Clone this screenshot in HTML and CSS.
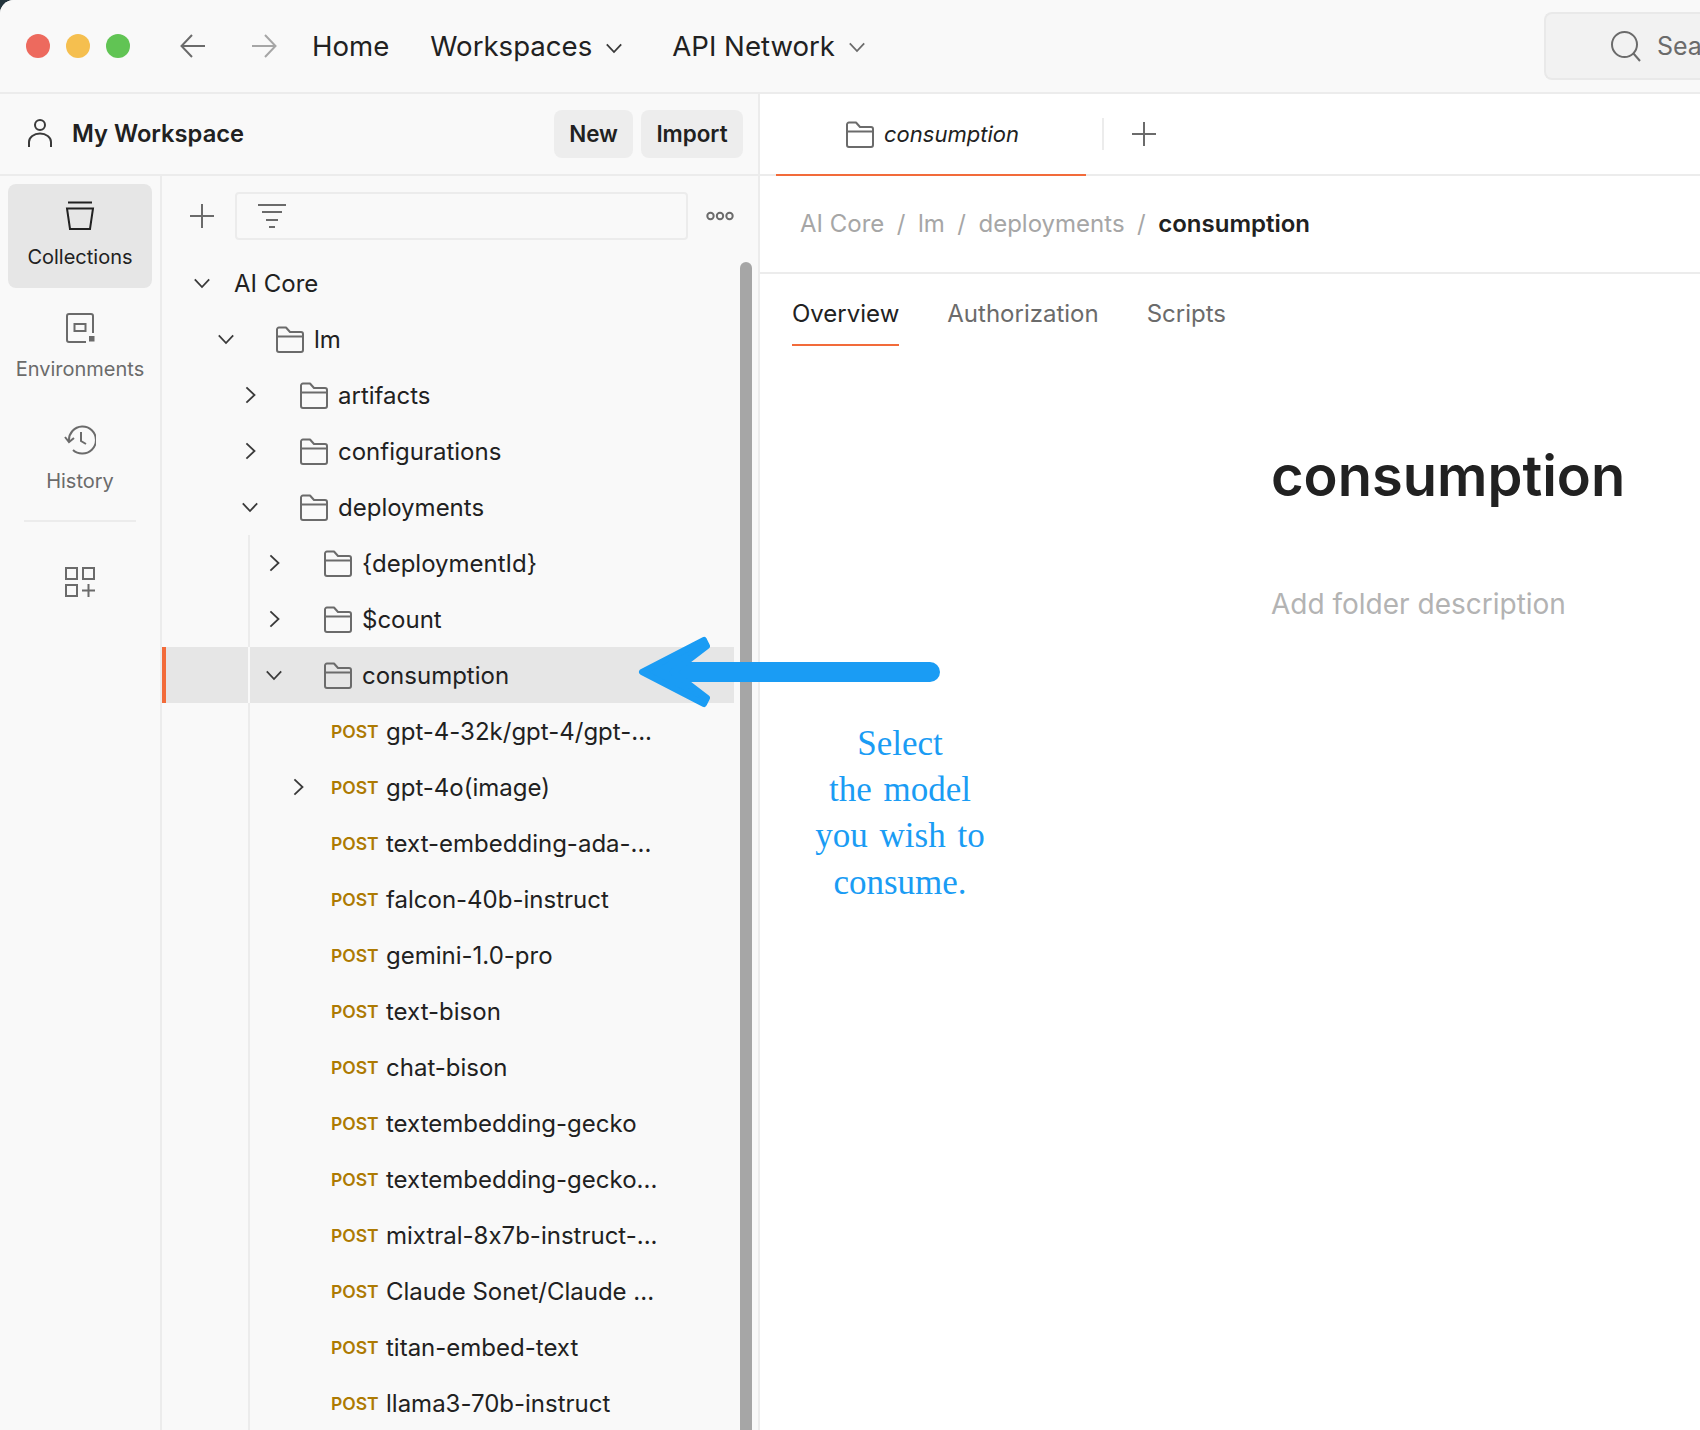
FILE: index.html
```html
<!DOCTYPE html>
<html lang="en">
<head>
    <meta charset="UTF-8">
    <title>Postman - consumption</title>
    <link rel="stylesheet" href="styles.css">
</head>
<body>
    <svg class="defs" width="0" height="0">
        <symbol id="folder" viewBox="0 0 28 28" fill="none" stroke="currentColor" stroke-width="2" stroke-linejoin="round">
            <path d="M1 4.500a2 2 0 0 1 2-2h7l4 4.500h11a2 2 0 0 1 2 2V25a2 2 0 0 1-2 2H3a2 2 0 0 1-2-2z"/>
            <path d="M1 11.500h26"/>
        </symbol>
        <symbol id="chev-down" viewBox="0 0 20 20" fill="none" stroke="currentColor" stroke-width="2">
            <path d="M2 6l8 8.500L18 6"/>
        </symbol>
        <symbol id="chev-right" viewBox="0 0 20 20" fill="none" stroke="currentColor" stroke-width="2">
            <path d="M6 1.500L15 10l-9 8.500"/>
        </symbol>
        <symbol id="plus" viewBox="0 0 26 26" fill="none" stroke="currentColor" stroke-width="2">
            <path d="M13 1v24M1 13h24"/>
        </symbol>
    </svg>

    <div class="app">
        <header class="topbar">
            <div class="lights">
                <span class="light red"></span>
                <span class="light yellow"></span>
                <span class="light green"></span>
            </div>
            <svg class="nav-arrow back" width="26" height="24" viewBox="0 0 26 24" fill="none" stroke="currentColor" stroke-width="2"><path d="M25 12H2M12 1L1.500 12 12 23"/></svg>
            <svg class="nav-arrow forward" width="26" height="24" viewBox="0 0 26 24" fill="none" stroke="currentColor" stroke-width="2"><path d="M1 12h23M14 1l10.500 11L14 23"/></svg>
            <a class="nav-link home">Home</a>
            <a class="nav-link workspaces">Workspaces <svg width="18" height="18"><use href="#chev-down"/></svg></a>
            <a class="nav-link api">API Network <svg class="light-chev" width="18" height="18"><use href="#chev-down"/></svg></a>
            <div class="search">
                <svg width="32" height="32" viewBox="0 0 32 32" fill="none" stroke="currentColor" stroke-width="2"><circle cx="14.500" cy="14.500" r="12.500"/><path d="M23.500 23.500L30 31"/></svg>
                <span>Search Postman</span>
            </div>
        </header>

        <div class="workarea">
            <aside class="sidebar">
                <div class="ws-head">
                    <svg width="24" height="28" viewBox="0 0 24 28" fill="none" stroke="#3a3a3a" stroke-width="2"><circle cx="12" cy="6" r="5"/><path d="M1 28v-5a11 8.500 0 0 1 22 0v5"/></svg>
                    <span class="ws-name">My Workspace</span>
                    <button class="ws-btn new">New</button>
                    <button class="ws-btn">Import</button>
                </div>
                <div class="side-body">
                    <nav class="rail">
                        <a class="rail-item active">
                            <svg width="30" height="30" viewBox="0 0 30 30" fill="none" stroke="currentColor" stroke-width="2"><path d="M3 1.500h24M2 7.500h26l-3 20.500H5z"/></svg>
                            <span>Collections</span>
                        </a>
                        <a class="rail-item">
                            <svg width="30" height="30" viewBox="0 0 30 30" fill="none" stroke="currentColor" stroke-width="2"><path d="M28 20V3a2 2 0 0 0-2-2H4a2 2 0 0 0-2 2v24a2 2 0 0 0 2 2h17"/><rect x="9.500" y="11" width="11" height="7"/><rect x="24" y="23" width="5.500" height="5.500" fill="currentColor" stroke="none"/></svg>
                            <span>Environments</span>
                        </a>
                        <a class="rail-item">
                            <svg width="32" height="30" viewBox="0 0 32 30" fill="none" stroke="currentColor" stroke-width="2"><path d="M5 16A13.500 13.500 0 1 1 18 28.500a13.500 13.500 0 0 1-9-3.500"/><path d="M1 12l4 5 5-4M17 7v9l5 3"/></svg>
                            <span>History</span>
                        </a>
                        <div class="rail-line"></div>
                        <svg class="rail-apps" width="30" height="30" viewBox="0 0 30 30" fill="none" stroke="currentColor" stroke-width="2"><rect x="1" y="1" width="11" height="11"/><rect x="18" y="1" width="11" height="11"/><rect x="1" y="18" width="11" height="11"/><path d="M23.500 17v13M17 23.500h13"/></svg>
                    </nav>
                    <section class="panel">
                        <div class="panel-tools">
                            <svg class="tool-plus" width="26" height="26"><use href="#plus"/></svg>
                            <div class="filter">
                                <svg width="28" height="24" viewBox="0 0 28 24" fill="none" stroke="currentColor" stroke-width="2"><path d="M0 1h28M4 8h20M8 16h12M11 23h6"/></svg>
                            </div>
                            <svg class="tool-more" width="28" height="12" viewBox="0 0 28 12" fill="none" stroke="currentColor" stroke-width="2"><circle cx="4.500" cy="6" r="3.200"/><circle cx="14" cy="6" r="3.200"/><circle cx="23.500" cy="6" r="3.200"/></svg>
                        </div>
                        <div class="tree">
                            <div class="row lvl0"><svg class="chev" width="18" height="18"><use href="#chev-down"/></svg><span class="name">AI Core</span></div>
                            <div class="row lvl1"><svg class="chev" width="18" height="18"><use href="#chev-down"/></svg><svg class="fold" width="28" height="28"><use href="#folder"/></svg><span class="name">lm</span></div>
                            <div class="row lvl2"><svg class="chev" width="18" height="18"><use href="#chev-right"/></svg><svg class="fold" width="28" height="28"><use href="#folder"/></svg><span class="name">artifacts</span></div>
                            <div class="row lvl2"><svg class="chev" width="18" height="18"><use href="#chev-right"/></svg><svg class="fold" width="28" height="28"><use href="#folder"/></svg><span class="name">configurations</span></div>
                            <div class="row lvl2"><svg class="chev" width="18" height="18"><use href="#chev-down"/></svg><svg class="fold" width="28" height="28"><use href="#folder"/></svg><span class="name">deployments</span></div>
                            <div class="row lvl3 guide"><svg class="chev" width="18" height="18"><use href="#chev-right"/></svg><svg class="fold" width="28" height="28"><use href="#folder"/></svg><span class="name">{deploymentId}</span></div>
                            <div class="row lvl3 guide"><svg class="chev" width="18" height="18"><use href="#chev-right"/></svg><svg class="fold" width="28" height="28"><use href="#folder"/></svg><span class="name">$count</span></div>
                            <div class="row lvl3 guide selected"><svg class="chev" width="18" height="18"><use href="#chev-down"/></svg><svg class="fold" width="28" height="28"><use href="#folder"/></svg><span class="name">consumption</span></div>
                            <div class="row req guide"><span class="post">POST</span><span class="name">gpt-4-32k/gpt-4/gpt-...</span></div>
                            <div class="row req guide has-chev"><svg class="chev" width="18" height="18"><use href="#chev-right"/></svg><span class="post">POST</span><span class="name">gpt-4o(image)</span></div>
                            <div class="row req guide"><span class="post">POST</span><span class="name">text-embedding-ada-...</span></div>
                            <div class="row req guide"><span class="post">POST</span><span class="name">falcon-40b-instruct</span></div>
                            <div class="row req guide"><span class="post">POST</span><span class="name">gemini-1.0-pro</span></div>
                            <div class="row req guide"><span class="post">POST</span><span class="name">text-bison</span></div>
                            <div class="row req guide"><span class="post">POST</span><span class="name">chat-bison</span></div>
                            <div class="row req guide"><span class="post">POST</span><span class="name">textembedding-gecko</span></div>
                            <div class="row req guide"><span class="post">POST</span><span class="name">textembedding-gecko...</span></div>
                            <div class="row req guide"><span class="post">POST</span><span class="name">mixtral-8x7b-instruct-...</span></div>
                            <div class="row req guide"><span class="post">POST</span><span class="name">Claude Sonet/Claude ...</span></div>
                            <div class="row req guide"><span class="post">POST</span><span class="name">titan-embed-text</span></div>
                            <div class="row req guide"><span class="post">POST</span><span class="name">llama3-70b-instruct</span></div>
                        </div>
                        <div class="scrollbar"></div>
                    </section>
                </div>
            </aside>

            <main class="main">
                <div class="tabbar">
                    <div class="tab">
                        <svg width="30" height="28"><use href="#folder"/></svg>
                        <span>consumption</span>
                    </div>
                    <div class="tab-sep"></div>
                    <svg class="tab-plus" width="26" height="26"><use href="#plus"/></svg>
                </div>
                <div class="crumbs">
                    <span>AI Core</span><i>/</i><span>lm</span><i>/</i><span>deployments</span><i>/</i><b>consumption</b>
                </div>
                <div class="subtabs">
                    <a class="subtab active">Overview</a>
                    <a class="subtab">Authorization</a>
                    <a class="subtab">Scripts</a>
                </div>
                <div class="overview">
                    <h1>consumption</h1>
                    <p>Add folder description</p>
                </div>
            </main>
        </div>

        <!-- annotation drawn on top of the screenshot -->
        <svg class="callout-arrow" width="320" height="80" viewBox="0 0 320 80">
            <path class="arrow-shaft" d="M30 36H295"/>
            <path class="arrow-head" d="M7 36L69 4L72 10L38 36L72 62L69 68z"/>
        </svg>
        <div class="callout-text">Select<br>the model<br>you wish to<br>consume.</div>
    </div>
</body>
</html>
```

FILE: styles.css
```css
* {
    box-sizing: border-box;
}

html, body {
    margin: 0;
    height: 100%;
    overflow: hidden;
}

body {
    background: #23343c;
    font-family: 'Inter', 'Noto Sans', sans-serif;
    font-feature-settings: "calt" 0;
    color: #212121;
}

.defs {
    position: absolute;
}

.app {
    position: relative;
    height: 1430px;
    width: 1700px;
    background: #fff;
    border-top-left-radius: 14px;
    overflow: hidden;
    display: flex;
    flex-direction: column;
}

/* top bar */
.topbar {
    flex: none;
    height: 94px;
    background: #f9f9f9;
    border-bottom: 2px solid #ececec;
    display: flex;
    align-items: center;
}

.lights {
    display: flex;
    gap: 16px;
    margin-left: 26px;
}

.light {
    width: 24px;
    height: 24px;
    border-radius: 50%;
}

.light.red { background: #ed6a5e; }
.light.yellow { background: #f5bf4f; }
.light.green { background: #61c454; }

.nav-arrow.back {
    margin-left: 50px;
    color: #6b6b6b;
}

.nav-arrow.forward {
    margin-left: 45px;
    color: #a6a6a6;
}

.nav-link {
    font-size: 27.600px;
    color: #212121;
    white-space: nowrap;
    display: flex;
    align-items: center;
    gap: 13px;
}

.nav-link svg {
    color: #3a3a3a;
    margin-top: 3px;
}

.nav-link svg.light-chev {
    color: #6b6b6b;
    margin-top: 1px;
}

.nav-link.home { margin-left: 35px; }
.nav-link.workspaces { margin-left: 41px; }
.nav-link.api { margin-left: 49px; }

.search {
    margin-left: auto;
    width: 156px;
    flex: none;
    height: 68px;
    background: #f2f2f2;
    border: 2px solid #e9e9e9;
    border-right: 0;
    border-radius: 8px 0 0 8px;
    display: flex;
    align-items: center;
    padding-left: 64px;
    gap: 15px;
    color: #6b6b6b;
    font-size: 25px;
    white-space: nowrap;
    overflow: hidden;
}

.search svg {
    flex: none;
}

/* workspace area */
.workarea {
    flex: 1;
    display: flex;
    min-height: 0;
}

.sidebar {
    flex: none;
    width: 760px;
    background: #f9f9f9;
    border-right: 2px solid #ececec;
    display: flex;
    flex-direction: column;
}

.ws-head {
    flex: none;
    height: 82px;
    border-bottom: 2px solid #ececec;
    display: flex;
    align-items: center;
    padding: 0 15px 2px 28px;
}

.ws-name {
    font-size: 23.700px;
    font-weight: 600;
    margin-left: 20px;
    margin-right: auto;
}

.ws-btn {
    height: 48px;
    width: 102px;
    border: none;
    border-radius: 8px;
    background: #ededed;
    color: #212121;
    font-family: inherit;
    font-feature-settings: inherit;
    font-size: 22.400px;
    font-weight: 600;
    margin-top: 1px;
}

.ws-btn.new {
    width: 79px;
    margin-right: 8px;
}

.side-body {
    flex: 1;
    display: flex;
    min-height: 0;
}

/* icon rail */
.rail {
    flex: none;
    width: 162px;
    border-right: 2px solid #ececec;
    padding: 8px 8px 0;
    display: flex;
    flex-direction: column;
    align-items: center;
}

.rail-item {
    width: 144px;
    height: 104px;
    margin-bottom: 8px;
    border-radius: 8px;
    display: flex;
    flex-direction: column;
    align-items: center;
    padding-top: 17px;
    gap: 14px;
    color: #6b6b6b;
    font-size: 20px;
}

.rail-item svg {
    flex: none;
}

.rail-item.active {
    background: #e6e6e6;
    color: #212121;
}

.rail-line {
    width: 112px;
    height: 2px;
    background: #ececec;
}

.rail-apps {
    margin-top: 45px;
    color: #6b6b6b;
}

/* collections panel */
.panel {
    flex: 1;
    position: relative;
    min-width: 0;
    overflow: hidden;
}

.panel-tools {
    height: 79px;
    display: flex;
    align-items: center;
    color: #6b6b6b;
}

.tool-plus {
    margin-left: 27px;
}

.filter {
    margin-left: 20px;
    width: 453px;
    height: 48px;
    border: 2px solid #ececec;
    border-radius: 4px;
    display: flex;
    align-items: center;
    padding-left: 21px;
}

.tool-more {
    margin-left: 18px;
}

.row {
    position: relative;
    height: 56px;
    width: 572px;
    display: flex;
    align-items: center;
    font-size: 24px;
    white-space: nowrap;
}

.lvl0 { padding-left: 31px; }
.lvl1 { padding-left: 55px; }
.lvl2 { padding-left: 79px; }
.lvl3 { padding-left: 103px; }

.chev {
    flex: none;
    color: #3a3a3a;
}

.fold {
    flex: none;
    margin-left: 41px;
    margin-right: 10px;
    color: #6b6b6b;
}

.lvl0 .name {
    margin-left: 23px;
}

.req {
    padding-left: 169px;
}

.req.has-chev {
    padding-left: 127px;
}

.req.has-chev .post {
    margin-left: 24px;
}

.post {
    width: 55px;
    flex: none;
    font-size: 17.500px;
    font-weight: 600;
    color: #ad7a03;
}

.guide::before {
    content: "";
    position: absolute;
    left: 86px;
    top: 0;
    bottom: 0;
    width: 2px;
    background: #ececec;
}

.selected {
    background: #e6e6e6;
    border-left: 4px solid #f26b3a;
    padding-left: 99px;
}

.selected::before {
    left: 82px;
    background: #f9f9f9;
}

.scrollbar {
    position: absolute;
    left: 578px;
    top: 86px;
    bottom: -10px;
    width: 12px;
    border-radius: 6px 6px 0 0;
    background: #a6a6a6;
}

/* right side */
.main {
    flex: 1;
    min-width: 0;
    background: #fff;
}

.tabbar {
    height: 82px;
    border-bottom: 2px solid #ececec;
    display: flex;
    align-items: center;
    padding-left: 16px;
}

.tab {
    width: 310px;
    height: 82px;
    align-self: flex-start;
    border-bottom: 2px solid #f26b3a;
    display: flex;
    align-items: center;
    gap: 9px;
    padding-left: 69px;
    color: #6b6b6b;
}

.tab span {
    font-size: 22px;
    font-style: italic;
    color: #212121;
}

.tab-sep {
    width: 2px;
    height: 32px;
    margin-left: 16px;
    background: #ececec;
}

.tab-plus {
    margin-left: 27px;
    color: #6b6b6b;
}

.crumbs {
    height: 98px;
    border-bottom: 2px solid #ececec;
    display: flex;
    align-items: center;
    padding: 0 0 2px 40px;
    font-size: 24px;
    color: #a6a6a6;
}

.crumbs i {
    font-style: normal;
    margin: 0 12.500px;
}

.crumbs b {
    color: #212121;
    font-weight: 600;
}

.subtabs {
    display: flex;
    gap: 48px;
    padding-left: 32px;
    font-size: 24px;
    color: #6b6b6b;
}

.subtab {
    height: 72px;
    padding-top: 25px;
}

.subtab.active {
    color: #212121;
    border-bottom: 2px solid #f26b3a;
}

.overview {
    padding-left: 511px;
}

.overview h1 {
    margin: 95px 0 0;
    font-size: 56px;
    font-weight: 600;
    line-height: 70px;
    white-space: nowrap;
}

.overview p {
    margin: 76px 0 0;
    font-size: 28px;
    color: #b3b3b3;
}

/* annotation */
.callout-arrow {
    position: absolute;
    left: 635px;
    top: 636px;
}

.arrow-shaft {
    fill: none;
    stroke: #1a9cf4;
    stroke-width: 20px;
    stroke-linecap: round;
}

.arrow-head {
    fill: #1a9cf4;
    stroke: #1a9cf4;
    stroke-width: 6px;
    stroke-linejoin: round;
}

.callout-text {
    position: absolute;
    left: 780px;
    top: 721px;
    width: 240px;
    text-align: center;
    font-family: 'Liberation Serif', serif;
    font-size: 35px;
    word-spacing: 3px;
    line-height: 46.200px;
    color: #1a9cf4;
}
```
